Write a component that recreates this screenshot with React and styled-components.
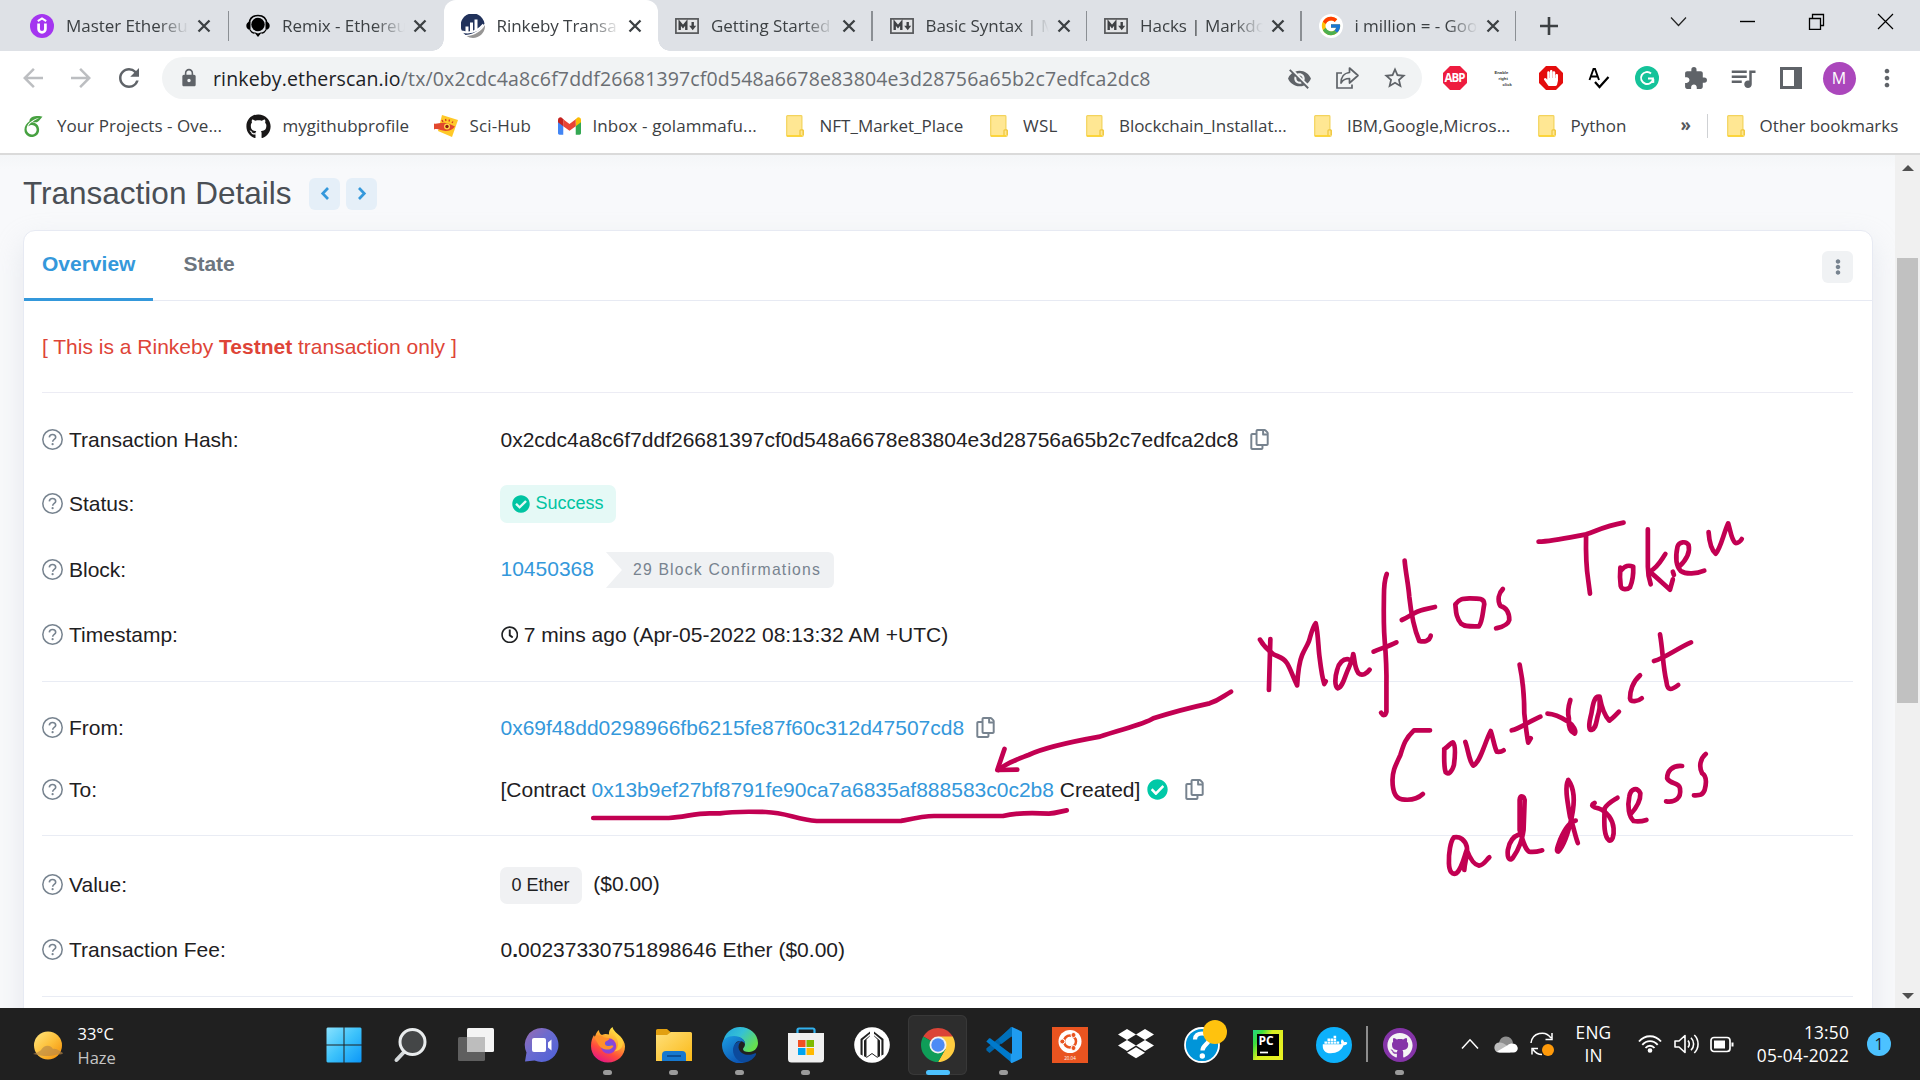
import React from "react";
import styled, { createGlobalStyle, css } from "styled-components";
import {
  FaRegCopy, FaRegClock, FaCheckCircle,
  FaEllipsisV, FaGithub, FaHandPaper, FaDocker,
} from "react-icons/fa";
import {
  MdArrowBack, MdArrowForward, MdRefresh, MdLock, MdVisibilityOff, MdStarBorder,
  MdExtension, MdQueueMusic, MdMoreVert,
} from "react-icons/md";
import { FcGoogle } from "react-icons/fc";
import { SiOverleaf } from "react-icons/si";

const UI = `"Open Sans", "Noto Sans", sans-serif`;
const PAGE = `"Liberation Sans", Arial, sans-serif`;

const Global = createGlobalStyle`
  * { box-sizing: border-box; }
  body { margin: 0; background: #fff; overflow: hidden; }
  svg { display: block; flex: none; }
`;

const Screen = styled.div`
  position: relative;
  width: 1920px;
  height: 1080px;
  overflow: hidden;
  display: flex;
  flex-direction: column;
  font-family: ${UI};
`;

/* ---------- tab strip ---------- */
const TabStrip = styled.div`
  height: 51px;
  flex: none;
  display: flex;
  background: #dee1e6;
  padding-left: 13px;
`;
const Tab = styled.div`
  width: ${(p) => p.$w || 214.5}px;
  height: 51px;
  display: flex;
  align-items: center;
  padding-left: 17px;
  position: relative;
  ${(p) => p.$active && css`
    background: #fff;
    border-radius: 12px 12px 0 0;
    &::before, &::after {
      content: "";
      position: absolute;
      bottom: 0;
      width: 12px;
      height: 12px;
    }
    &::before { left: -12px; background: radial-gradient(circle at 0 0, #dee1e6 11.5px, #fff 12px); }
    &::after { right: -12px; background: radial-gradient(circle at 100% 0, #dee1e6 11.5px, #fff 12px); }
  `}
`;
const TabTitle = styled.span`
  width: 131px;
  margin: 0 0 0 12px;
  white-space: nowrap;
  font-size: 17px;
  line-height: 26px;
  letter-spacing: -0.05px;
  color: #3c4043;
  mask-image: linear-gradient(to right, #000 92px, transparent 123px);
`;
const Separator = styled.i`
  width: 1.5px;
  height: 30px;
  background: #8b8f94;
  margin-top: 11px;
  margin-left: -1.5px;
`;
const NewTab = styled.div`
  display: flex;
  align-items: center;
  margin-left: 24px;
  width: 130px;
`;
const WindowButtons = styled.div`
  display: flex;
  align-items: flex-start;
  padding-top: 13px;
  gap: 52px;
`;

/* ---------- toolbar ---------- */
const Toolbar = styled.div`
  height: 54px;
  flex: none;
  display: flex;
  align-items: center;
  background: #fff;
`;
const NavButtons = styled.div`
  width: 162px;
  padding-left: 18px;
  display: flex;
  gap: 18px;
`;
const AddressBar = styled.div`
  width: 1260px;
  height: 42px;
  border-radius: 21px;
  background: #f1f3f4;
  display: flex;
  align-items: center;
  padding-left: 17px;
`;
const Url = styled.div`
  width: 1074px;
  margin-left: 14px;
  padding-top: 2px;
  font-size: 19.5px;
  line-height: 30px;
  white-space: nowrap;
  color: #6a6e73;
  letter-spacing: 0.145px;
  b { font-weight: 400; color: #202124; }
`;
const AddressIcons = styled.div`
  display: flex;
  align-items: center;
  gap: 22px;
`;
const Extensions = styled.div`
  display: flex;
  align-items: center;
  margin-left: 9px;
`;
const ExtSlot = styled.div`
  width: 48px;
  display: flex;
  justify-content: center;
`;
const TinyLabel = styled.div`
  width: 17px;
  padding-top: 1px;
  font: 700 4.2px/6px ${PAGE};
  color: #333;
  display: flex;
  flex-direction: column;
`;
const TinyLine = styled.span`
  padding-left: ${(p) => p.$x}px;
`;
const AbpText = styled.text`
  font: 700 11.5px ${UI};
  fill: #fff;
`;
const Avatar = styled.div`
  width: 33px;
  height: 33px;
  border-radius: 50%;
  background: #ab47bc;
  color: #fff;
  font-size: 16px;
  line-height: 33px;
  text-align: center;
`;

/* ---------- bookmarks ---------- */
const Bookmarks = styled.div`
  height: 50px;
  flex: none;
  display: flex;
  align-items: center;
  background: #fff;
  border-bottom: 2px solid #dadada;
  padding-bottom: 6px;
`;
const Bookmark = styled.div`
  width: ${(p) => p.$w}px;
  display: flex;
  align-items: center;
  font-size: 17px;
  line-height: 26px;
  white-space: nowrap;
  color: #3c4043;
  letter-spacing: ${(p) => p.$ls || 0}px;
`;
const BookmarkIcon = styled.span`
  width: ${(p) => p.$w}px;
  flex: none;
  display: flex;
`;
const Overflow = styled.div`
  width: 27px;
  padding-bottom: 2px;
  padding-left: 1px;
  font: 700 17px/24px ${UI};
  color: #55585c;
`;
const BookmarkRule = styled.i`
  width: 1px;
  height: 24px;
  background: #cfd1d4;
  margin-right: 19px;
`;

/* ---------- page ---------- */
const Viewport = styled.div`
  height: 853px;
  flex: none;
  display: flex;
  background: #f8fafd;
`;
const Content = styled.div`
  width: 1895px;
  padding: 0 0 0 23px;
  overflow: hidden;
  font-family: ${PAGE};
  background: linear-gradient(#f4f6f8, #f8f9fb 14px);
`;
const Heading = styled.div`
  height: 75px;
  display: flex;
  align-items: center;
  padding-top: 3px;
`;
const Title = styled.h1`
  margin: 0;
  padding-bottom: 2px;
  width: 286px;
  font-size: 31.5px;
  font-weight: 400;
  color: #4a4f55;
  white-space: nowrap;
`;
const SquareButton = styled.button`
  width: 31px;
  height: 32px;
  margin-right: 6px;
  padding: 0;
  border: 0;
  border-radius: 6px;
  background: ${(p) => (p.$grey ? "#f0f2f4" : "#e5eff8")};
  color: ${(p) => (p.$grey ? "#77838f" : "#3498db")};
  display: flex;
  align-items: center;
  justify-content: center;
`;
const Card = styled.div`
  width: 1850px;
  height: 860px;
  border: 1px solid #e7eaf3;
  border-radius: 12px 12px 0 0;
  background: #fff;
  box-shadow: 0 12px 29px rgba(189, 197, 209, 0.3);
`;
const CardTabs = styled.div`
  height: 70px;
  border-bottom: 1px solid #e7eaf3;
  display: flex;
  justify-content: space-between;
  padding-right: 13px;
`;
const CardTab = styled.div`
  height: 70px;
  padding: 0 18px;
  margin-right: 12px;
  font-size: 21px;
  line-height: 66px;
  font-weight: 700;
  color: ${(p) => (p.$active ? "#3498db" : "#6c757e")};
  border-bottom: 3px solid ${(p) => (p.$active ? "#3498db" : "transparent")};
`;
const Group = styled.div`
  display: flex;
  align-items: center;
  padding-top: ${(p) => p.$pt || 0}px;
`;
const CardBody = styled.div`
  padding: 0 19px 0 18px;
  font-size: 21px;
  color: #1e2022;
`;
const Notice = styled.div`
  height: 92px;
  display: flex;
  align-items: center;
  white-space: pre;
  color: #de4437;
  border-bottom: 1px solid #ececf4;
`;
const Section = styled.div`
  padding: 15px 0;
  border-bottom: 1px solid #e9ecf4;
`;
const Row = styled.div`
  height: ${(p) => p.$h}px;
  display: grid;
  grid-template-columns: 458.5px 1fr;
  align-items: center;
`;
const Label = styled.div`
  display: flex;
  align-items: center;
  gap: 6px;
  white-space: nowrap;
  svg { color: #77838f; margin-bottom: 1px; }
`;
const Value = styled.div`
  display: flex;
  align-items: center;
  white-space: nowrap;
  > svg { color: ${(p) => p.$icon || "#77838f"}; margin-bottom: 1px; }
`;
const Text = styled.span`
  white-space: pre;
  margin-right: ${(p) => p.$mr || 0}px;
  padding-bottom: ${(p) => p.$pb || 0}px;
`;
const Link = styled(Text)`color: #3498db;`;
const Pill = styled.div`
  height: ${(p) => p.$h || 38}px;
  padding: 0 12px 0 11.5px;
  margin-left: -0.5px;
  margin-bottom: ${(p) => (p.$green ? 1 : 0)}px;
  border-radius: 7px;
  display: flex;
  align-items: center;
  gap: 6px;
  font-size: 18px;
  background: ${(p) => (p.$green ? "#e5f9f6" : "#f0f1f3")};
  color: ${(p) => (p.$green ? "#00c4a2" : "#1e2022")};
`;
const Confirmations = styled.div`
  width: 228px;
  height: 36px;
  margin-left: 12px;
  padding-left: 27px;
  border-radius: 0 6px 6px 0;
  background: #eff1f3;
  clip-path: polygon(0 0, 100% 0, 100% 100%, 0 100%, 16px 50%);
  font-size: 15.75px;
  line-height: 36px;
  letter-spacing: 1.19px;
  color: #77838f;
`;
const Green = styled.span`
  display: flex;
  margin-right: 16.5px;
  color: #00c9a7;
`;
const Scrollbar = styled.div`
  width: 25px;
  background: #f0f0f0;
  display: flex;
  flex-direction: column;
  align-items: center;
  padding-top: 10px;
`;
const Thumb = styled.div`
  width: 21px;
  height: 445px;
  margin: 87px 0 290px;
  background: #c1c1c1;
`;

/* ---------- taskbar ---------- */
const Taskbar = styled.div`
  height: 72px;
  flex: none;
  display: flex;
  align-items: center;
  background: #202020;
  color: #fff;
`;
const Weather = styled.div`
  width: 310.5px;
  padding-left: 33px;
  padding-top: 3px;
  display: flex;
  align-items: center;
  gap: 14.5px;
  font-size: 16.5px;
  line-height: 24px;
  span { display: block; color: #c5c5c5; }
`;
const AppSlot = styled.div`
  width: 66px;
  height: 72px;
  padding-top: 7px;
  display: flex;
  justify-content: center;
`;
const AppTile = styled.div`
  width: 59px;
  height: 60px;
  border-radius: 6px;
  display: flex;
  flex-direction: column;
  align-items: center;
  justify-content: space-between;
  padding: 12px 0 0.5px;
  position: relative;
  ${(p) => p.$active && css`
    background: #2d2d2d;
    box-shadow: inset 0 0 0 1px #383838;
  `}
`;
const RunMark = styled.i`
  width: ${(p) => (p.$active ? 24 : 9)}px;
  height: 5px;
  border-radius: 3px;
  background: ${(p) => (p.$active ? "#4cc2ff" : p.$on ? "#9b9b9b" : "transparent")};
`;
const AlertDot = styled.i`
  position: absolute;
  left: 31px;
  top: 5px;
  width: 24px;
  height: 24px;
  border-radius: 50%;
  background: #ffc20e;
`;
const TaskRule = styled.i`
  width: 2px;
  height: 36px;
  margin: 0 -1px;
  background: #8d8d8d;
`;
const Tray = styled.div`
  display: flex;
  align-items: center;
  margin-left: 28px;
`;
const TrayIcon = styled.div`
  margin-right: ${(p) => p.$mr}px;
`;
const TrayText = styled.div`
  width: ${(p) => p.$w}px;
  margin-right: ${(p) => p.$mr}px;
  text-align: ${(p) => p.$align};
  font-size: 17.3px;
  line-height: 23px;
  letter-spacing: 0.2px;
`;
const Badge = styled.div`
  width: 24px;
  height: 24px;
  border-radius: 50%;
  background: #4cc2ff;
  color: #1a1a1a;
  font-size: 16px;
  line-height: 24px;
  text-align: center;
`;

const Ink = styled.svg`
  position: absolute;
  left: 0;
  top: 0;
  fill: none;
  stroke: #c20052;
  stroke-width: 4.7;
  stroke-linecap: round;
  stroke-linejoin: round;
  path { vector-effect: non-scaling-stroke; }
`;

/* ---------- drawings ---------- */
const Svg = ({ w = 36, h = w, vb = "0 0 36 36", children, ...rest }) => (
  <svg width={w} height={h} viewBox={vb} fill="none" {...rest}>{children}</svg>
);

const CloseX = () => (
  <Svg w={14} vb="0 0 14 14"><path d="M1.5 1.5l11 11M12.500 1.500l-11 11" stroke="#3c4043" strokeWidth="2.300" /></Svg>
);
const QuestionIcon = () => (
  <Svg w={21} vb="0 0 21 21">
    <circle cx="10.500" cy="10.500" r="9.700" stroke="currentColor" strokeWidth="1.500" />
    <path d="M7.300 8.300C7.500 6.400 8.800 5.500 10.500 5.500c1.800 0 3.200 1 3.200 2.700 0 2.200-3 2.200-3 4.500" stroke="currentColor" strokeWidth="1.600" />
    <circle cx="10.600" cy="15.200" r="1.100" fill="currentColor" />
  </Svg>
);
const AngleIcon = ({ flip }) => (
  <Svg w={10} h={14} vb="0 0 10 14"><path d={flip ? "M2 1l5.300 5.500L2 12" : "M8 1L2.700 6.500 8 12"} stroke="currentColor" strokeWidth="2.700" /></Svg>
);
const MarkdownIcon = () => (
  <Svg w={24} h={16} vb="0 0 24 16">
    <rect x="0.900" y="0.900" width="22.200" height="14.200" fill="#e4e5e7" stroke="#55575a" strokeWidth="1.700" />
    <path d="M4.700 12V4.500L8 8.500l3.300-4V12" stroke="#3f4144" strokeWidth="2.400" />
    <path d="M17.700 4v5" stroke="#3f4144" strokeWidth="2.400" />
    <path d="M14.200 7.800h7L17.700 12.300z" fill="#3f4144" />
  </Svg>
);
const UdemyIcon = () => (
  <Svg w={24} vb="0 0 24 24">
    <circle cx="12" cy="12" r="12" fill="#a435f0" />
    <path d="M7.800 7.200L12 4.400l4.200 2.800" stroke="#fff" strokeWidth="2" />
    <path d="M8.600 9.500v5.500a3.400 3.400 0 0 0 6.800 0V9.500" stroke="#fff" strokeWidth="2.700" />
  </Svg>
);
const RemixIcon = () => (
  <Svg w={24} vb="0 0 24 24">
    <path d="M3 10C3.500 4.500 7 1.500 12 1.500S20.500 4.500 21 10" stroke="#000" strokeWidth="1.600" />
    <circle cx="12" cy="10.500" r="6.700" fill="#000" />
    <path d="M4.500 7.500C1.500 8 .3 9.500.3 11.700S1.500 15.500 4.500 16zM19.500 7.500c3 .5 4.200 2 4.200 4.200s-1.200 3.800-4.200 4.300z" fill="#000" />
    <path d="M4 16c1 2 2.500 2.800 4.500 3.300M20 16c-1 2-2.500 2.800-4.500 3.300" stroke="#000" strokeWidth="1.200" />
    <path d="M8 18l4 1.500 4-1.500-4 5z" fill="#000" />
  </Svg>
);
const EtherscanIcon = () => (
  <Svg w={24} vb="0 0 24 24">
    <path d="M4.500 21A12 12 0 1 1 23.500 9.500C22 14 14 20 4.500 21z" fill="#21325b" />
    <path d="M5.500 22C14 21.500 20.500 17 24 11c.5 7-5 13-12 13-2.500 0-4.500-.7-6.500-2z" fill="#979695" />
    <path d="M6 19v-6.500M10.500 18.500V8.500M15 17V5.500" stroke="#fff" strokeWidth="3" />
    <path d="M1 17.500c8 2.500 16-.5 21.500-7" stroke="#fff" strokeWidth="2" />
  </Svg>
);
const GoogleIcon = () => (
  <Svg w={24} vb="0 0 24 24">
    <circle cx="12" cy="12" r="12" fill="#fff" />
    <FcGoogle x="1" y="1" size={22} />
  </Svg>
);
const Folder = () => (
  <Svg w={18} h={22} vb="0 0 18 22">
    <path d="M0.700 1.500c0-.5.300-.8.800-.8H15c.5 0 .9.300.9.800v13l1.400 1V20c0 .8-.5 1.300-1.300 1.300H1.500c-.5 0-.8-.3-.8-.8z" fill="#ffe793" stroke="#f3d35c" strokeWidth="1.200" />
    <path d="M14 21v-5.500c0-.8 3.200-.8 3.200 0V20" stroke="#efc63c" strokeWidth="1.200" />
    <path d="M1 20.800h15" stroke="#ffd42a" strokeWidth="1.300" />
  </Svg>
);
const SciHubIcon = () => (
  <Svg w={24} vb="0 0 24 24">
    <path d="M8 1l16 5-6 17L4 17z" fill="#ffc928" />
    <path d="M0 9.500c3 1 6-1.500 12-.5 4 .5 7 3 9 3.500-2 3-6 4.500-9.500 4.500C7 17 4 14 0 15.500" fill="#e2482d" />
    <circle cx="13" cy="12.500" r="3" fill="#ffd94a" /><circle cx="13" cy="12.500" r="1.700" fill="#8c1d10" />
    <path d="M8 6l1 2M11.500 5l.5 2M15.500 5.500L15 7.500M19 7.500l-1 1.500" stroke="#d03a23" strokeWidth="1.300" />
  </Svg>
);
const GmailIcon = () => (
  <Svg w={23} h={18} vb="0 0 24 18">
    <path d="M0 2.500V16.500c0 .8.700 1.500 1.500 1.500H5.500V6.500z" fill="#4285f4" />
    <path d="M24 2.500V16.500c0 .8-.7 1.500-1.500 1.500H18.500V6.500z" fill="#34a853" />
    <path d="M18.500 2v7.200L24 5V2.600C24 .4 21.400-.8 19.700.6z" fill="#fbbc04" />
    <path d="M5.500 9.200V2L12 7l6.500-5v7.200L12 14z" fill="#ea4335" />
    <path d="M0 2.600V5l5.500 4.200V2L4.300.6C2.600-.8 0 .4 0 2.600z" fill="#c5221f" />
  </Svg>
);
const ShareIcon = () => (
  <Svg w={26} h={26} vb="0 0 26 26">
    <path d="M8 8H3v15h15v-3.500" stroke="#5f6368" strokeWidth="1.700" />
    <path d="M15.500 3l8.500 7.500-8.500 7.500v-4.500c-4 0-6.500 1-8.500 4.500 0-5.500 3-10 8.500-10.500z" stroke="#5f6368" strokeWidth="1.700" strokeLinejoin="round" />
  </Svg>
);
const octagon = "M7 0h10l7 7v10l-7 7H7l-7-7V7z";
const AbpIcon = () => (
  <Svg w={24} vb="0 0 24 24"><path d={octagon} fill="#ee1c3f" /><AbpText x="12" y="16.200" textAnchor="middle" textLength="21">ABP</AbpText></Svg>
);
const AdblockIcon = () => (
  <Svg w={24} vb="0 0 24 24"><path d={octagon} fill="#e40d0d" /><FaHandPaper x="4" y="4" size={16} color="#fff" /></Svg>
);
const SpellIcon = () => (
  <Svg w={22} h={22} vb="0 0 22 22">
    <path d="M1.500 13L5.500 2h1.500l4 11M3 9.500h6.500" stroke="#000" strokeWidth="1.900" />
    <path d="M7 15l4.500 5L20.500 10" stroke="#000" strokeWidth="2.200" />
  </Svg>
);
const GrammarlyIcon = () => (
  <Svg w={24} vb="0 0 24 24">
    <circle cx="12" cy="12" r="12" fill="#15c39a" />
    <path d="M16 7.500A6 6 0 1 0 18 12.500H13" stroke="#fff" strokeWidth="1.900" />
    <path d="M15.500 16.500l3-.5v-3" stroke="#fff" strokeWidth="1.500" />
  </Svg>
);
const PanelIcon = () => (
  <Svg w={22} vb="0 0 22 22"><path d="M1.500 1.500h19v19h-19z" stroke="#5f6368" strokeWidth="3" /><path d="M14 1h7v20h-7z" fill="#5f6368" /></Svg>
);

const WeatherIcon = () => (
  <Svg w={30} h={30} vb="0 0 30 30">
    <defs><linearGradient id="sun" x1="0" y1="0" x2="1" y2="1"><stop offset="0" stopColor="#ffe680" /><stop offset=".5" stopColor="#fdc03a" /><stop offset="1" stopColor="#f38b05" /></linearGradient></defs>
    <circle cx="15" cy="14.500" r="14" fill="url(#sun)" />
    <path d="M0 23c3-2 5-1 8-4 3-5 9-6 12-1 4-1 6 2 10 4 0 2-5 1-8 2-6 2-14 1-22-1z" fill="#b98746" opacity=".65" />
  </Svg>
);
const WindowsIcon = () => (
  <Svg>
    <defs><linearGradient id="win" gradientUnits="userSpaceOnUse" x1="0" y1="0" x2="36" y2="36"><stop offset="0" stopColor="#8be3ff" /><stop offset=".5" stopColor="#3cc2fb" /><stop offset="1" stopColor="#0a95f8" /></linearGradient></defs>
    <path d="M1.500 .5H17.500V17.500H.5V1.500zM18.500 .5H34.500L35.500 1.500V17.500H18.500zM.5 18.500H17.500V35.500H1.500L.5 34.500zM18.500 18.500H35.500V34.500L34.500 35.500H18.500z" fill="url(#win)" />
  </Svg>
);
const SearchIcon = () => (
  <Svg>
    <path d="M12.500 24.500L4.500 33" stroke="#d4d8da" strokeWidth="4" strokeLinecap="round" />
    <circle cx="20.500" cy="15" r="12.500" fill="#444647" stroke="#e9eced" strokeWidth="3" />
  </Svg>
);
const TaskViewIcon = () => (
  <Svg>
    <rect x="9" y="1" width="27" height="24" rx="1.500" fill="#f4f4f4" />
    <rect x="0" y="10" width="27" height="24" rx="1.500" fill="#5f5f5f" />
    <path d="M9 10h18v15H9z" fill="#bdbdbd" />
  </Svg>
);
const ChatIcon = () => (
  <Svg>
    <defs><linearGradient id="chat" x1="0" y1="0" x2="1" y2="1"><stop offset="0" stopColor="#9a6bb0" /><stop offset=".45" stopColor="#6a6bd0" /><stop offset="1" stopColor="#4d60d8" /></linearGradient></defs>
    <path d="M18 1a17 17 0 1 1-7.500 32.500L1 34.500l1.500-9A17 17 0 0 1 18 1z" fill="url(#chat)" />
    <rect x="8" y="11" width="14" height="14" rx="2" fill="#fff" />
    <path d="M24 15.500l3.500-3v11l-3.500-3z" fill="#fff" />
  </Svg>
);
const FirefoxIcon = () => (
  <Svg>
    <defs>
      <linearGradient id="fx" x1=".8" y1="0" x2=".3" y2="1"><stop offset="0" stopColor="#fff44f" /><stop offset=".4" stopColor="#ffa52e" /><stop offset=".7" stopColor="#ff4a3d" /><stop offset="1" stopColor="#e31587" /></linearGradient>
      <radialGradient id="fxg"><stop offset="0" stopColor="#5a5fe8" /><stop offset="1" stopColor="#9b3bd0" /></radialGradient>
    </defs>
    <path d="M22.500 0c1 4 4.500 6 7.500 9 3 3.200 5 7 5 10.500C35 28.500 27.500 35.500 18 35.500S1 28.500 1 19c0-5 1.500-8.500 3-11l1 2.500C5.500 7 7 4.500 9 3c0 2.500 1 4 3 5 3-1.500 5-1 7-.5C18.500 4.500 20 1.500 22.500 0z" fill="url(#fx)" />
    <circle cx="18.500" cy="19" r="7.700" fill="url(#fxg)" />
    <path d="M4 10c3-2 7-2 10 .5 2 .5 5 .3 5.500 1-.5 2-4 2.500-4.500 4-.5 2 1 3.500 3 3.500 2.500 0 4-1 5.500 0-1.500 3-4.500 4-7.500 3.500C9 21.500 8 16 4 10z" fill="#ff8f2c" />
    <path d="M23 3c.5 5 4 7 5 12 .5 4-1 7.500-4 9.500 7-.5 10-6 8.500-11.500C30.500 8.500 25 7 23 3z" fill="#ffd53d" opacity=".75" />
  </Svg>
);
const ExplorerIcon = () => (
  <Svg>
    <defs><linearGradient id="fold" x1="0" y1="0" x2="1" y2="1"><stop offset="0" stopColor="#ffe07a" /><stop offset="1" stopColor="#fbb917" /></linearGradient></defs>
    <path d="M0 3.500A1.500 1.500 0 0 1 1.500 2H11l4 3.500h19v5H0z" fill="#e2a010" />
    <path d="M0 8h11l4-3h19.500A1.500 1.500 0 0 1 36 6.500V34H0z" fill="url(#fold)" />
    <path d="M6 34v-6a4 4 0 0 1 4-4h16a4 4 0 0 1 4 4v6z" fill="#1678cf" />
    <path d="M11 29h14" stroke="#0b4f96" strokeWidth="2" />
  </Svg>
);
const EdgeIcon = () => (
  <Svg>
    <defs>
      <linearGradient id="eg1" x1="0" y1="0" x2="1" y2=".6"><stop offset="0" stopColor="#1fa3e0" /><stop offset=".5" stopColor="#35c1d5" /><stop offset="1" stopColor="#66e04e" /></linearGradient>
      <linearGradient id="eg2" x1="0" y1="0" x2=".6" y2="1"><stop offset="0" stopColor="#1b9de2" /><stop offset="1" stopColor="#0d57b5" /></linearGradient>
    </defs>
    <path d="M1 16C2 6 10 0 18 0c10 0 18 7 18 16 0 5-4 9-9 9-4 0-6-1-6-3 0-1 2-2 2-5 0-4-4-7-9-7-7 0-12 4-13 6z" fill="url(#eg1)" />
    <path d="M0 18C0 12 6 9 12 9c7 0 11 4 11 8-1-2-3-3-5-3-5 0-6 5-6 8 0 6 4 12 11 14-2 .5-3 .5-5 .5C8 36 0 28 0 18z" fill="url(#eg2)" />
    <path d="M18 14c-4 1-7 4-7 9 0 7 6 13 12 12.500 5-1 9-4 11-8 .5-1-.5-1.500-1.500-1-6 3-15 1-16-6 0-3 1-5 3-6z" fill="#0c4a9c" />
  </Svg>
);
const StoreIcon = () => (
  <Svg>
    <path d="M9.500 8V3A1.500 1.500 0 0 1 11 1.500h14A1.500 1.500 0 0 1 26.500 3v5" stroke="#31b1ee" strokeWidth="2.200" />
    <path d="M0 6h36v26a3.500 3.500 0 0 1-3.500 3.500h-29A3.500 3.500 0 0 1 0 32z" fill="#f0f0f0" />
    <path d="M10 13h7.500v7H10z" fill="#f25022" /><path d="M18.500 13H26v7h-7.500z" fill="#7fba00" />
    <path d="M10 21h7.500v7H10z" fill="#00a4ef" /><path d="M18.500 21H26v7h-7.500z" fill="#ffb900" />
  </Svg>
);
const ArchIcon = () => (
  <Svg>
    <circle cx="18" cy="18" r="17.800" fill="#fff" />
    <path d="M6.500 27.500V12L16 4.500V9L12.500 12.500V30.500zM29.500 27.500V12L20 4.500V9l3.500 3.500V30.500z" fill="#202020" />
    <path d="M9.300 29V13.300L16 7.500M26.700 29V13.300L20 7.500" stroke="#fff" strokeWidth="1.400" />
    <path d="M12.500 30.500L18 26.500l5.500 4" stroke="#202020" strokeWidth="1" />
  </Svg>
);
const ChromeIcon = () => (
  <Svg>
    <path d="M18 18L3.280 9.500A17 17 0 0 1 32.720 9.500z" fill="#db4437" />
    <path d="M18 9.500h14.720A17 17 0 0 1 18 35l7.360-12.750z" fill="#ffcd40" />
    <path d="M3.280 9.500A17 17 0 0 0 18 35l7.360-12.750L18 18z" fill="#0f9d58" />
    <circle cx="18" cy="18" r="8.500" fill="#f1f1f1" />
    <circle cx="18" cy="18" r="6.700" fill="#4c8bf5" />
  </Svg>
);
const CodeIcon = () => (
  <Svg>
    <path d="M26 0l-1.500 9L3.500 26 .5 23.500 .3 21.500z" fill="#0065a9" />
    <path d="M.3 14.500L3 11.500c.5-.5 1-.3 1.500 0L26.500 28 26 36z" fill="#007acc" />
    <path d="M26 0l9 4.200c.6.300 1 .8 1 1.500V30.300c0 .7-.4 1.200-1 1.500L26 36c-.8 0-1.300-.4-1.300-1V1c0-.6.500-1 1.300-1z" fill="#1f9cf0" />
    <path d="M26 9L14.500 18 26 27z" fill="#202020" />
    <path d="M26 0c-1 0-1.500.5-2.500 1.500L12 12.500 15.500 17l10.500-8z" fill="#0070ba" />
  </Svg>
);
const UbuntuLabel = styled.text`
  font: 4.5px ${UI};
  fill: #fff;
`;
const UbuntuIcon = () => (
  <Svg>
    <path d="M0 0h36v36H0z" fill="#e95420" />
    <circle cx="18" cy="14.500" r="11.500" fill="#fff" />
    <circle cx="18" cy="14.500" r="6" stroke="#e95420" strokeWidth="2.500" />
    <g fill="#e95420" stroke="#fff" strokeWidth="1"><circle cx="10.300" cy="14.500" r="2.500" /><circle cx="21.500" cy="8" r="2.500" /><circle cx="21.500" cy="21" r="2.500" /></g>
    <UbuntuLabel x="18" y="33" textAnchor="middle">20.04</UbuntuLabel>
  </Svg>
);
const DropboxIcon = () => (
  <Svg><path d="M9 2l9 5.500-9 5.500-9-5.500zM27 2l9 5.500-9 5.500-9-5.500zM9 13l9 5.500L9 24l-9-5.500zM27 13l9 5.500-9 5.500-9-5.500zM9 25.800l9-5.500 9 5.500-9 5.500z" fill="#fff" /></Svg>
);
const HelpIcon = () => (
  <Svg>
    <circle cx="18" cy="18" r="17" fill="#0095d9" stroke="#fff" strokeWidth="1.800" />
    <path d="M11 12.500c0-4 3-6 7-6s7 2.500 7 6c0 4.500-6.500 5.500-6.500 11" stroke="#fff" strokeWidth="4.200" />
    <circle cx="18.300" cy="29" r="2.700" fill="#fff" />
  </Svg>
);
const PyLabel = styled.text`
  font: 700 12px ${UI};
  fill: #fff;
`;
const PyCharmIcon = () => (
  <Svg>
    <defs><linearGradient id="py" x1="0" y1="0" x2="1" y2=".6"><stop offset="0" stopColor="#21d789" /><stop offset=".25" stopColor="#3ce03c" /><stop offset=".5" stopColor="#d8ee20" /><stop offset="1" stopColor="#e6f022" /></linearGradient></defs>
    <path d="M3 3h30v30H3z" fill="url(#py)" /><path d="M7 7h22v22H7z" fill="#000" />
    <PyLabel x="8.500" y="18">PC</PyLabel><path d="M10 25.500h8" stroke="#fff" strokeWidth="1.700" />
  </Svg>
);
const DockerIcon = () => (
  <Svg><circle cx="18" cy="18" r="18" fill="#0db1fb" /><FaDocker x="6.500" y="5" size={25} color="#fff" /></Svg>
);
const GithubDesktopIcon = () => (
  <Svg><circle cx="18" cy="18" r="17" fill="#8534a8" /><FaGithub x="5" y="5.500" size={26} color="#f4f4f4" /></Svg>
);

const TrayChevron = () => <Svg w={18} h={12} vb="0 0 18 12"><path d="M1 10.500L9 1.800l8 8.700" stroke="#fff" strokeWidth="1.500" /></Svg>;
const CloudIcon = () => (
  <Svg w={24} h={17} vb="0 0 24 17">
    <path d="M5 12C4 6 6.500.5 12 .5c4 0 6.500 3 7 6.500L14 13z" fill="#8f8f8f" />
    <path d="M5.500 16.500C-1 16.500-1.500 7 5 6.500c3-.3 5 1 7 2.500l7 5-3 2.500z" fill="#bdbdbd" />
    <path d="M3 15.500L14 9c2-2 8-2.500 9.500 2 1 3-1 5.500-4 5.500H5.500z" fill="#fff" />
  </Svg>
);
const SyncIcon = () => (
  <Svg w={26} h={26} vb="0 0 26 26">
    <path d="M2 12A11 11 0 0 1 22 7M23 2v6.500h-6.500M3 23.500V17.500h6M4 18.500c2 3 5 5 9 5" stroke="#fff" strokeWidth="1.500" />
    <circle cx="19" cy="19" r="6" fill="#ff9a0a" />
  </Svg>
);
const WifiIcon = () => (
  <Svg w={24} h={18} vb="0 0 24 18" stroke="#fff" strokeWidth="1.900">
    <path d="M1 6.500C7-.5 17-.5 23 6.500M4.300 9.800c4.400-4.900 11-4.900 15.400 0M7.500 13c2.500-3 6.500-3 9 0" />
    <circle cx="12" cy="15.500" r="1.400" fill="#fff" />
  </Svg>
);
const VolumeIcon = () => (
  <Svg w={25} h={20} vb="0 0 25 20" stroke="#fff" strokeWidth="1.600">
    <path d="M1 7h4l6-5.500v17L5 13H1z" strokeLinejoin="round" /><path d="M14 6.500c1.500 2 1.500 5 0 7M17 3.800c3.500 3.500 3.500 9 0 12.500M20.300 1c5 5 5 13 0 18" />
  </Svg>
);
const BatteryIcon = () => (
  <Svg w={24} h={17} vb="0 0 24 17"><rect x="1" y="1.500" width="19" height="14" rx="3" stroke="#fff" strokeWidth="1.700" /><path d="M4 4.500h11v8H4z" fill="#fff" /><path d="M21.500 6.500h2v4h-2z" fill="#fff" /></Svg>
);

/* ---------- data ---------- */
const tabs = [
  { title: "Master Ethereu", icon: <UdemyIcon />, w: 216, sep: true },
  { title: "Remix - Ethereu", icon: <RemixIcon /> },
  { title: "Rinkeby Transa", icon: <EtherscanIcon />, active: true },
  { title: "Getting Started", icon: <MarkdownIcon />, sep: true },
  { title: "Basic Syntax | M", icon: <MarkdownIcon />, sep: true },
  { title: "Hacks | Markdo", icon: <MarkdownIcon />, sep: true },
  { title: "i million = - Goo", icon: <GoogleIcon />, sep: true },
];

const bookmarks = [
  { text: "Your Projects - Ove...", icon: <SiOverleaf size={21} color="#47a141" />, iw: 34, w: 222.5, ls: 0.04 },
  { text: "mygithubprofile", icon: <FaGithub size={25} color="#191717" />, iw: 37, w: 188 },
  { text: "Sci-Hub", icon: <SciHubIcon />, iw: 36, w: 124, ls: 0.15 },
  { text: "Inbox - golammafu...", icon: <GmailIcon />, iw: 35, w: 228, ls: 0.08 },
  { text: "NFT_Market_Place", icon: <Folder />, iw: 34, w: 204 },
  { text: "WSL", icon: <Folder />, iw: 33.5, w: 96, ls: 0.3 },
  { text: "Blockchain_Installat...", icon: <Folder />, iw: 33.5, w: 228, ls: -0.06 },
  { text: "IBM,Google,Micros...", icon: <Folder />, iw: 33.5, w: 224, ls: 0.06 },
  { text: "Python", icon: <Folder />, iw: 33, w: 142 },
];

const apps = [
  [<WindowsIcon />], [<SearchIcon />], [<TaskViewIcon />], [<ChatIcon />],
  [<FirefoxIcon />, "on"], [<ExplorerIcon />, "on"], [<EdgeIcon />, "on"], [<StoreIcon />, "on"],
  [<ArchIcon />], [<ChromeIcon />, "active"], [<CodeIcon />, "on"], [<UbuntuIcon />],
  [<DropboxIcon />], [<HelpIcon />, "alert"], [<PyCharmIcon />], [<DockerIcon />],
  [<GithubDesktopIcon />, "on"],
];

const strokes = [
  "M141 417L137 570", "M112 419C120 435 130 447 150 463C170 473 180 475 188 490C198 508 206 535 216 556C218 520 220 490 230 465C238 445 248 430 250 420C256 398 260 380 268 370C275 400 275 440 278 465C282 500 285 530 292 552L296 544",
  "M360 478C345 475 332 490 328 510C322 530 320 560 330 565C345 560 350 525 360 505C366 490 372 475 373 462C378 480 375 500 388 520C398 530 412 520 419 509",
  "M467 222C460 240 459 260 459 290C458 350 458 380 461 420C465 470 467 500 466 560L466 635C463 648 457 648 451 638", "M430 455C450 445 470 440 494 427",
  "M517 182C520 220 527 250 530 290C535 340 545 390 558 423C570 426 587 425 590 407", "M509 360C530 350 545 335 570 329L602 321",
  "M659 313C670 296 680 296 700 295C725 295 740 295 740 312C735 340 735 365 725 379C700 380 685 380 675 371C660 350 661 335 659 313",
  "M792 267C780 280 776 300 785 318C800 322 810 335 810 360C806 378 785 382 773 385",
  "M892 125C930 124 980 112 1025 103C1060 90 1080 78 1130 68", "M1025 105C1024 160 1025 200 1031 240L1036 281",
  "M1124 210C1135 195 1145 195 1157 200C1158 225 1155 245 1148 262C1140 270 1125 270 1122 258C1119 235 1120 215 1121 203",
  "M1198 88L1198 200C1198 225 1202 240 1206 253", "M1247 162C1235 180 1228 200 1203 215C1220 230 1240 250 1260 269L1268 238", "M1268 215L1271 225",
  "M1286 200C1305 180 1318 160 1312 135C1305 122 1285 125 1281 140C1276 165 1275 195 1290 213C1305 224 1335 222 1356 212",
  "M1368 96C1370 125 1376 150 1388 161C1402 145 1410 100 1423 70C1430 95 1432 120 1443 129C1450 130 1458 123 1461 117",
  "M588 691L543 691C520 715 515 730 505 765C490 800 484 810 483 840C483 870 488 895 510 898C535 902 555 895 568 882",
  "M628 747C640 740 645 728 652 727C660 735 658 770 655 795C650 815 640 825 632 817C626 800 628 770 628 747",
  "M687 726C695 750 698 785 709 797C730 785 740 730 758 693C765 715 768 740 775 755C782 756 790 754 794 751",
  "M839 494C848 540 852 590 852 640C855 670 858 700 863 728L870 715", "M817 691C840 685 865 665 897 650",
  "M917 641C940 642 960 655 975 665C990 675 998 695 993 701C980 695 975 680 977 655C973 640 975 620 981 600",
  "M1060 590C1050 590 1045 605 1040 640C1034 665 1030 690 1040 690C1055 685 1052 665 1060 640C1066 620 1062 605 1063 590C1068 620 1075 645 1090 662C1100 655 1108 645 1117 635",
  "M1176 526C1155 545 1148 575 1148 595C1150 608 1170 605 1181 595",
  "M1232 403C1240 450 1240 500 1250 545C1253 575 1265 570 1283 555", "M1215 483C1245 475 1280 445 1319 427",
  "M684 1110C686 1080 695 1060 691 1040C686 1020 672 1008 655 1012C645 1025 640 1060 641 1090C642 1115 650 1125 662 1120C678 1105 685 1065 691 1050C700 1075 712 1095 725 1097C740 1095 745 1080 754 1072",
  "M838 1003C820 1010 810 1025 806 1050C803 1080 815 1085 822 1070C835 1050 845 1030 850 990L853 900C850 885 840 885 839 900L839 990C848 1020 852 1045 865 1055C880 1058 892 1054 902 1051",
  "M996 962C975 965 960 1000 952 1020C945 1040 940 1055 947 1055C960 1040 975 1000 985 950C995 900 992 865 975 840C965 860 972 900 980 950C990 980 995 1010 1002 1029",
  "M1049 909C1035 915 1045 922 1060 925C1085 935 1100 960 1102 985C1104 1010 1098 1022 1090 1022C1075 1010 1075 975 1077 925C1085 910 1095 905 1113 893",
  "M1148 945C1165 925 1178 905 1177 880C1168 860 1150 865 1146 890C1140 920 1145 950 1158 963C1172 966 1185 963 1194 960",
  "M1294 798C1265 795 1252 815 1252 835C1262 855 1285 845 1288 865C1292 895 1275 908 1249 904",
  "M1360 762C1345 775 1340 800 1350 820C1365 830 1362 850 1357 870C1350 888 1342 886 1327 886",
];
const pointers = [
  "M1472 845C1455 860 1450 870 1430 880C1400 890 1350 910 1320 925C1300 945 1250 960 1215 980C1160 995 1110 1010 1075 1035C1050 1050 1030 1060 1016 1080",
  "M1028 1017L1014 1080L1053 1079",
  "M222 1224H370C400 1222 420 1210 450 1210H470C500 1203 530 1205 560 1206C600 1208 620 1228 660 1233H825C850 1225 870 1218 890 1218H1025C1050 1208 1080 1208 1115 1211C1130 1210 1140 1203 1150 1201",
];

const Field = ({ h, label, icon, children }) => (
  <Row $h={h}>
    <Label><QuestionIcon />{label}</Label>
    <Value $icon={icon}>{children}</Value>
  </Row>
);

export default function App() {
  return (
    <Screen>
      <Global />
      <TabStrip>
        {tabs.map((t) => (
          <React.Fragment key={t.title}>
            <Tab $w={t.w} $active={t.active}>
              {t.icon}
              <TabTitle>{t.title}</TabTitle>
              <CloseX />
            </Tab>
            {t.sep && <Separator />}
          </React.Fragment>
        ))}
        <NewTab><Svg w={18} vb="0 0 18 18"><path d="M9 0v18M0 9h18" stroke="#3c4043" strokeWidth="2.600" /></Svg></NewTab>
        <WindowButtons>
          <Svg w={17} vb="0 0 17 17"><path d="M1 4.500l7.500 8 7.500-8" stroke="#222" strokeWidth="1.200" /></Svg>
          <Svg w={17} vb="0 0 17 17"><path d="M1 8.500h15" stroke="#000" strokeWidth="1.400" /></Svg>
          <Svg w={17} vb="0 0 17 17"><path d="M1.500 5.500h11v11h-11zM4.500 5V1.500h11v11H13" stroke="#000" strokeWidth="1.300" /></Svg>
          <Svg w={17} vb="0 0 17 17"><path d="M1 1l15 15M16 1L1 16" stroke="#000" strokeWidth="1.200" /></Svg>
        </WindowButtons>
      </TabStrip>

      <Toolbar>
        <NavButtons>
          <MdArrowBack size={30} color="#bcbec1" />
          <MdArrowForward size={30} color="#bcbec1" />
          <MdRefresh size={30} color="#5f6368" />
        </NavButtons>
        <AddressBar>
          <MdLock size={20} color="#5f6368" />
          <Url><b>rinkeby.etherscan.io</b>/tx/0x2cdc4a8c6f7ddf26681397cf0d548a6678e83804e3d28756a65b2c7edfca2dc8</Url>
          <AddressIcons>
            <MdVisibilityOff size={25} color="#5f6368" />
            <ShareIcon />
            <MdStarBorder size={26} color="#5f6368" />
          </AddressIcons>
        </AddressBar>
        <Extensions>
          <ExtSlot><AbpIcon /></ExtSlot>
          <ExtSlot>
            <TinyLabel><TinyLine $x={0}>Enable</TinyLine><TinyLine $x={4}>right</TinyLine><TinyLine $x={8}>click</TinyLine></TinyLabel>
          </ExtSlot>
          <ExtSlot><AdblockIcon /></ExtSlot>
          <ExtSlot><SpellIcon /></ExtSlot>
          <ExtSlot><GrammarlyIcon /></ExtSlot>
          <ExtSlot><MdExtension size={25} color="#5f6368" /></ExtSlot>
          <ExtSlot><MdQueueMusic size={30} color="#5f6368" /></ExtSlot>
          <ExtSlot><PanelIcon /></ExtSlot>
          <ExtSlot><Avatar>M</Avatar></ExtSlot>
          <ExtSlot><MdMoreVert size={28} color="#5f6368" /></ExtSlot>
        </Extensions>
      </Toolbar>

      <Bookmarks>
        <BookmarkIcon $w={23} />
        {bookmarks.map((b) => (
          <Bookmark key={b.text} $w={b.w} $ls={b.ls}>
            <BookmarkIcon $w={b.iw}>{b.icon}</BookmarkIcon>
            {b.text}
          </Bookmark>
        ))}
        <Overflow>»</Overflow>
        <BookmarkRule />
        <Bookmark $w={180} $ls={-0.06}><BookmarkIcon $w={33}><Folder /></BookmarkIcon>Other bookmarks</Bookmark>
      </Bookmarks>

      <Viewport>
        <Content>
          <Heading>
            <Title>Transaction Details</Title>
            <SquareButton><AngleIcon /></SquareButton>
            <SquareButton><AngleIcon flip /></SquareButton>
          </Heading>
          <Card>
            <CardTabs>
              <Group>
                <CardTab $active>Overview</CardTab>
                <CardTab>State</CardTab>
              </Group>
              <Group $pt={3}><SquareButton $grey><FaEllipsisV size={16} /></SquareButton></Group>
            </CardTabs>
            <CardBody>
              <Notice>[ This is a Rinkeby <b>Testnet</b> transaction only ]</Notice>
              <Section>
                <Field h={64} label="Transaction Hash:">
                  <Text $mr={10.5}>0x2cdc4a8c6f7ddf26681397cf0d548a6678e83804e3d28756a65b2c7edfca2dc8</Text>
                  <FaRegCopy size={21} />
                </Field>
                <Field h={64} label="Status:">
                  <Pill $green><FaCheckCircle size={18} />Success</Pill>
                </Field>
                <Field h={68} label="Block:">
                  <Link $pb={3}>10450368</Link>
                  <Confirmations>29 Block Confirmations</Confirmations>
                </Field>
                <Field h={62} label="Timestamp:" icon="#1e2022">
                  <FaRegClock size={17.5} />
                  <Text> 7 mins ago (Apr-05-2022 08:13:32 AM +UTC)</Text>
                </Field>
              </Section>
              <Section>
                <Field h={62} label="From:">
                  <Link $mr={10.5}>0x69f48dd0298966fb6215fe87f60c312d47507cd8</Link>
                  <FaRegCopy size={21} />
                </Field>
                <Field h={61} label="To:">
                  <Text>[Contract </Text>
                  <Link>0x13b9ef27bf8791fe90ca7a6835af888583c0c2b8</Link>
                  <Text $mr={6.5}> Created]</Text>
                  <Green><FaCheckCircle size={21} /></Green>
                  <FaRegCopy size={21} />
                </Field>
              </Section>
              <Section>
                <Field h={68} label="Value:">
                  <Pill $h={37}>0 Ether</Pill>
                  <Text $pb={2}>{"  ($0.00)"}</Text>
                </Field>
                <Field h={62} label="Transaction Fee:">
                  <Text>0<b>.</b>00237330751898646 Ether ($0.00)</Text>
                </Field>
              </Section>
            </CardBody>
          </Card>
        </Content>
        <Scrollbar>
          <Svg w={12} h={6} vb="0 0 12 6"><path d="M6 0l6 6H0z" fill="#505050" /></Svg>
          <Thumb />
          <Svg w={12} h={6} vb="0 0 12 6"><path d="M0 0h12L6 6z" fill="#505050" /></Svg>
        </Scrollbar>
      </Viewport>

      <Taskbar>
        <Weather><WeatherIcon /><div>33°C<span>Haze</span></div></Weather>
        {apps.map(([icon, state], i) => (
          <React.Fragment key={i}>
            {i === 16 && <TaskRule />}
            <AppSlot>
              <AppTile $active={state === "active"}>
                {icon}
                <RunMark $on={state === "on"} $active={state === "active"} />
                {state === "alert" && <AlertDot />}
              </AppTile>
            </AppSlot>
          </React.Fragment>
        ))}
        <Tray>
          <TrayIcon $mr={15}><TrayChevron /></TrayIcon>
          <TrayIcon $mr={11}><CloudIcon /></TrayIcon>
          <TrayIcon $mr={11}><SyncIcon /></TrayIcon>
          <TrayText $w={56} $mr={16} $align="center">ENG<br />IN</TrayText>
          <TrayIcon $mr={12}><WifiIcon /></TrayIcon>
          <TrayIcon $mr={11}><VolumeIcon /></TrayIcon>
          <TrayIcon $mr={0}><BatteryIcon /></TrayIcon>
          <TrayText $w={115.5} $mr={18} $align="right">13:50<br />05-04-2022</TrayText>
          <Badge>1</Badge>
        </Tray>
      </Taskbar>

      <Ink width="1920" height="1080" viewBox="0 0 1920 1080">
        <g transform="translate(1220 500) scale(0.35714 0.33333)">{strokes.map((d) => <path key={d} d={d} />)}</g>
        <g transform="translate(480 410) scale(0.5102 0.33333)">{pointers.map((d) => <path key={d} d={d} />)}</g>
      </Ink>
    </Screen>
  );
}
